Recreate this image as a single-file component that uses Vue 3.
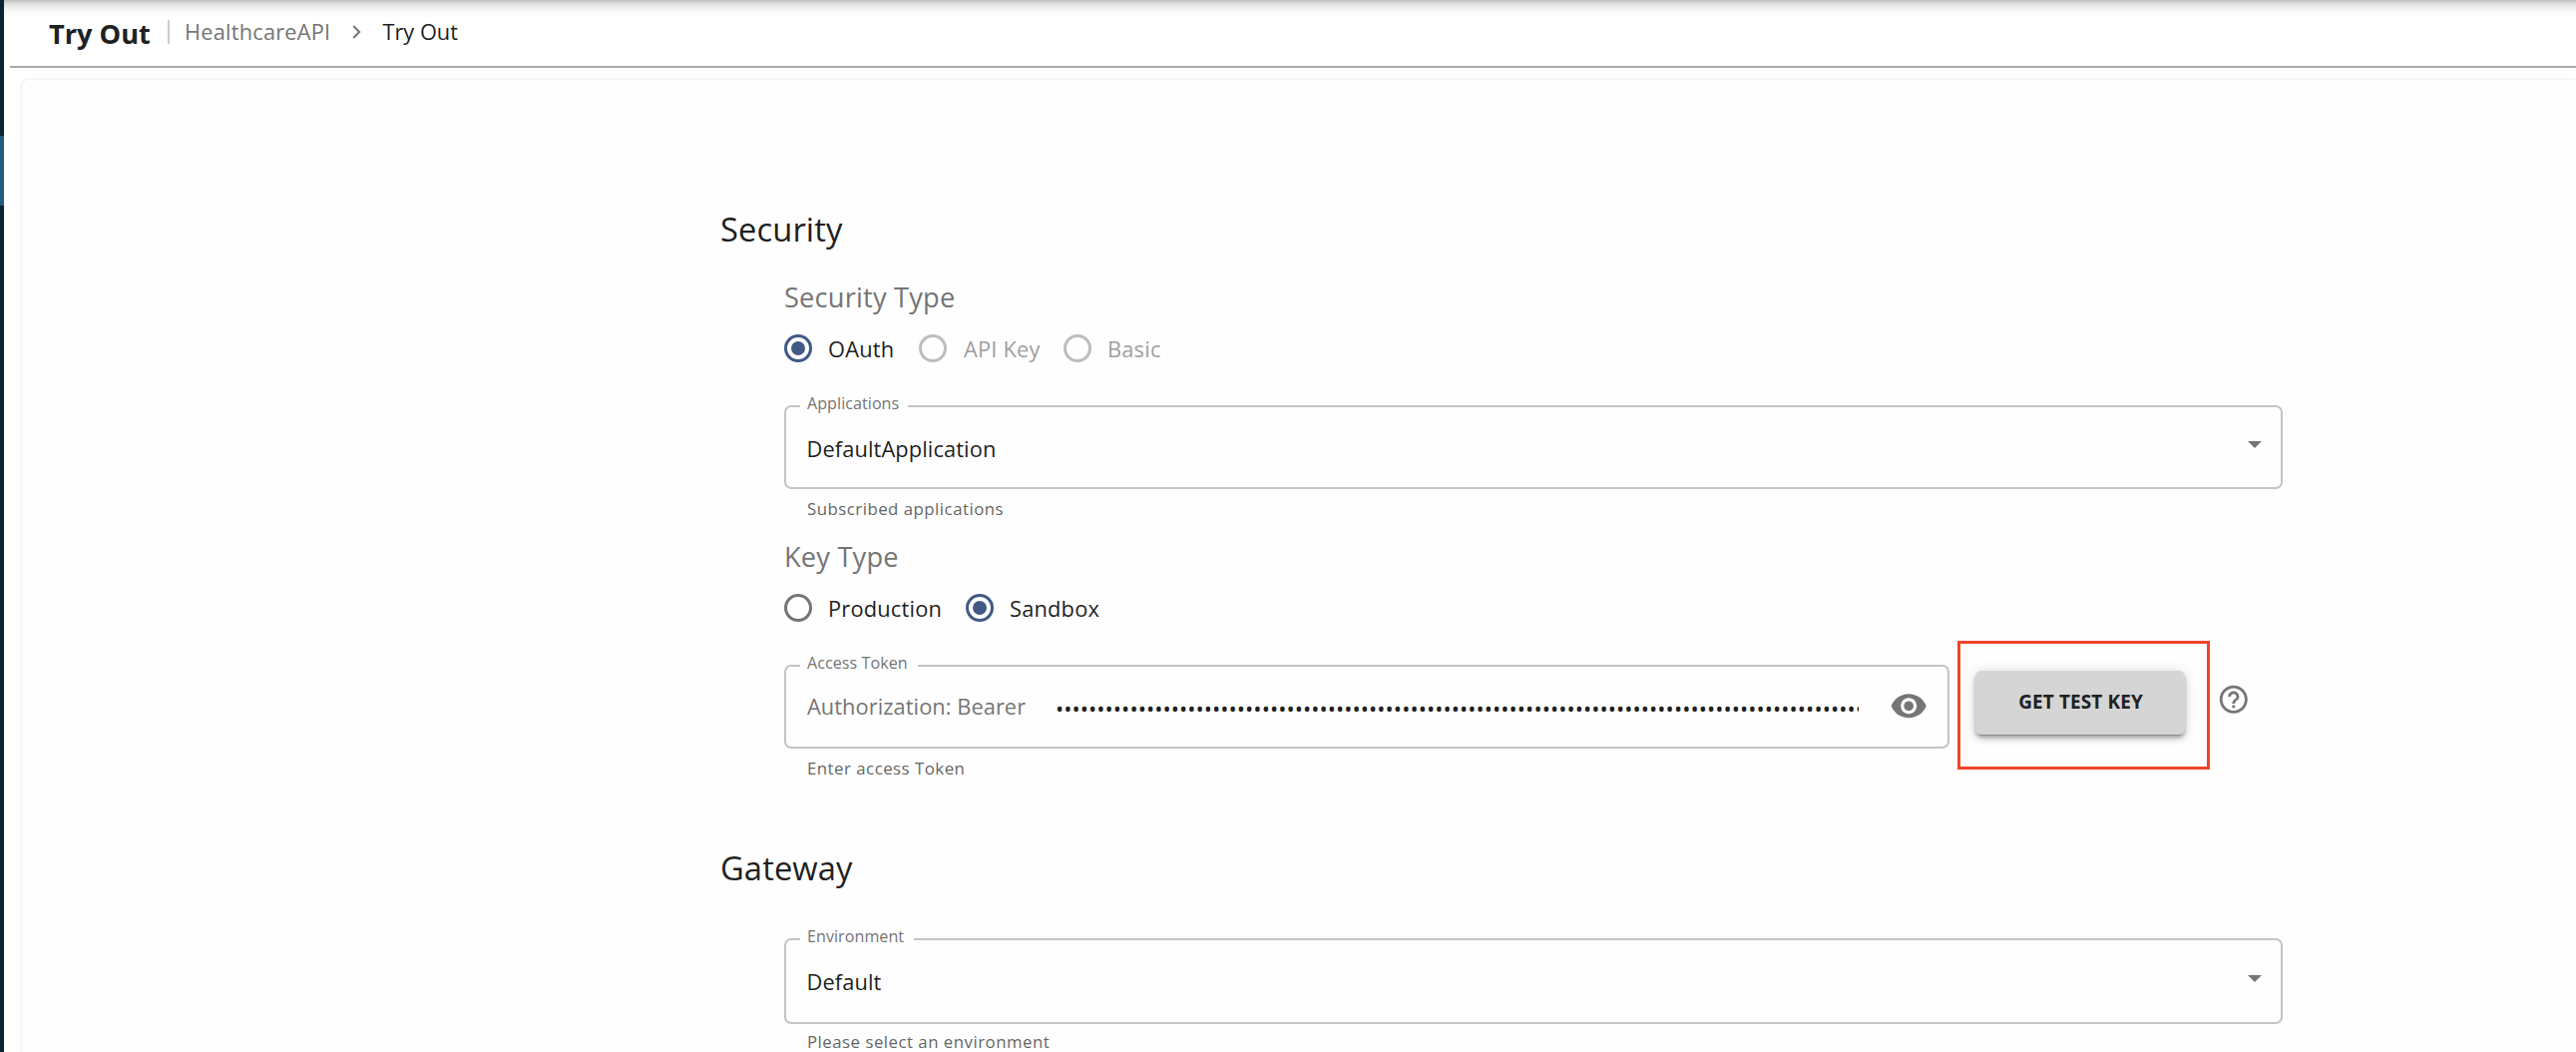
<script setup>
const token = '•'.repeat(98)
</script>

<template>
  <div class="app">
    <nav class="rail"><span class="rail-active"></span></nav>
    <main class="page">
      <header class="topbar">
        <h1 class="title">Try Out</h1>
        <span class="divider"></span>
        <span class="crumb muted">HealthcareAPI</span>
        <svg class="chevron" viewBox="0 0 9 14"><path d="M1.2 1 7.2 7l-6 6" fill="none" stroke="#757575" stroke-width="2" /></svg>
        <span class="crumb">Try Out</span>
      </header>
      <section class="card">
        <h2 class="heading">Security</h2>
        <div class="group">
          <h3 class="subheading">Security Type</h3>
          <div class="radios">
            <span class="dot on"></span><span class="radio-label a">OAuth</span>
            <span class="dot off"></span><span class="radio-label b disabled">API Key</span>
            <span class="dot off"></span><span class="radio-label disabled">Basic</span>
          </div>
          <div class="field select">
            <label class="label w1">Applications</label>
            <span class="value">DefaultApplication</span>
            <svg class="arrow" viewBox="0 0 14 7"><path d="M0 0h14L7 7z" fill="#757575" /></svg>
          </div>
          <p class="helper">Subscribed applications</p>
          <h3 class="subheading key">Key Type</h3>
          <div class="radios">
            <span class="dot"></span><span class="radio-label c">Production</span>
            <span class="dot on"></span><span class="radio-label">Sandbox</span>
          </div>
          <div class="token-row">
            <div class="field token">
              <label class="label w2">Access Token</label>
              <span class="prefix">Authorization: Bearer</span>
              <span class="bullets">{{ token }}</span>
              <svg class="eye" viewBox="0 0 24 24"><path fill="#757575" d="M12 4.5C7 4.5 2.73 7.61 1 12c1.73 4.39 6 7.5 11 7.5s9.27-3.11 11-7.5c-1.73-4.39-6-7.5-11-7.5zM12 17c-2.76 0-5-2.24-5-5s2.24-5 5-5 5 2.24 5 5-2.24 5-5 5zm0-8c-1.66 0-3 1.34-3 3s1.34 3 3 3 3-1.34 3-3-1.34-3-3-3z" /></svg>
            </div>
            <div class="highlight"><button class="button">GET TEST KEY</button></div>
            <svg class="help" viewBox="0 0 24 24"><path fill="#757575" d="M11 18h2v-2h-2v2zm1-16C6.48 2 2 6.48 2 12s4.48 10 10 10 10-4.48 10-10S17.52 2 12 2zm0 18c-4.41 0-8-3.59-8-8s3.59-8 8-8 8 3.59 8 8-3.59 8-8 8zm0-14c-2.21 0-4 1.79-4 4h2c0-1.1.9-2 2-2s2 .9 2 2c0 2-3 1.75-3 5h2c0-2.25 3-2.5 3-5 0-2.21-1.79-4-4-4z" /></svg>
          </div>
          <p class="helper">Enter access Token</p>
        </div>
        <h2 class="heading gateway">Gateway</h2>
        <div class="group">
          <div class="field select env">
            <label class="label w3">Environment</label>
            <span class="value">Default</span>
            <svg class="arrow" viewBox="0 0 14 7"><path d="M0 0h14L7 7z" fill="#757575" /></svg>
          </div>
          <p class="helper tight">Please select an environment</p>
        </div>
      </section>
    </main>
  </div>
</template>

<style>
body { margin: 0; overflow: hidden; background: #fff; }
</style>

<style scoped>
* { box-sizing: border-box; }
.app { display: flex; width: 2582px; height: 1054px; overflow: hidden; background: #fff; color: #1f1f1f; font-family: "Open Sans", sans-serif; }
h1, h2, h3, p { margin: 0; white-space: nowrap; }
.rail { width: 4px; height: 100%; padding-top: 136px; background: #0c2330; }
.rail-active { display: block; height: 70px; background: #255b7f; }
.page { flex: 1; min-width: 0; background: linear-gradient(#bdbdbd 0, #dadada 3px, #ededed 7px, #f9f9f9 12px, #fff 18px); }
.topbar { display: flex; align-items: flex-start; height: 68px; margin-left: 6px; padding-left: 39px; border-bottom: 2px solid #aaa; }
.title { font-size: 27.2px; font-weight: 700; line-height: 38px; margin-top: 15px; width: 119px; color: #212121; }
.divider { width: 2px; height: 24px; margin-top: 20px; background: #ccc; }
.crumb { font-size: 21.8px; line-height: 30px; letter-spacing: .00938em; margin-top: 17px; margin-left: 15px; }
.muted { color: #757575; }
.chevron { width: 9px; height: 14px; margin: 25px 0 0 22px; }
.chevron + .crumb { margin-left: 21px; letter-spacing: 0; }
.card { height: 1100px; margin: 12px 0 0 18px; padding: 128px 0 0 700px; border-radius: 6px 0 0 0; background: #fefefe; box-shadow: 0 0 3px rgba(0,0,0,.15); }
.heading { font-size: 32.7px; line-height: 44px; font-weight: 400; letter-spacing: .1px; }
.group { width: 1566px; padding-left: 64px; }
.subheading { font-size: 27.2px; line-height: 38px; font-weight: 400; color: #757575; letter-spacing: .0075em; margin-top: 27px; }
.subheading.key { margin-top: 16px; }
.radios { display: flex; align-items: center; height: 40px; margin-top: 12px; }
.dot { display: flex; align-items: center; justify-content: center; width: 28px; height: 28px; border: 3px solid #757575; border-radius: 50%; }
.dot.off { border-color: #bdbdbd; }
.dot.on { border-color: #415a85; }
.dot.on::after { content: ""; width: 14px; height: 14px; border-radius: 50%; background: #415a85; }
.radio-label { font-size: 21.8px; line-height: 30px; letter-spacing: .00938em; margin-left: 16px; padding-top: 1px; }
.radio-label.a { width: 91px; }
.radio-label.b { width: 101px; padding-left: 1px; }
.radio-label.c { width: 138px; }
.disabled { color: #9e9e9e; }
.field { position: relative; display: flex; align-items: center; width: 1502px; height: 84px; margin-top: 37px; padding: 0 19px 0 20px; border: 2px solid #c4c4c4; border-radius: 7px; }
.label { position: absolute; top: -14px; left: 14px; height: 20px; padding-left: 7px; background: #fefefe; font-size: 16.1px; line-height: 20px; letter-spacing: .003em; color: #757575; white-space: nowrap; }
.w1 { width: 108px; }
.w2 { width: 118px; }
.w3 { width: 114px; }
.value { flex: 1; font-size: 21.8px; line-height: 30px; letter-spacing: .005em; padding: 3px 0 0 .5px; }
.arrow { width: 14px; height: 7px; margin-bottom: 5px; }
.helper { margin: 7px 0 0 23px; font-size: 16.8px; line-height: 26px; letter-spacing: .03em; color: #666; }
.token-row { display: flex; margin-top: 37px; height: 84px; }
.token { width: 1168px; margin-top: 0; padding-left: 21px; padding-right: 20px; }
.prefix { width: 249px; font-size: 21.8px; line-height: 30px; letter-spacing: .003em; color: #757575; white-space: nowrap; }
.bullets { width: 805px; overflow: hidden; font-size: 21.8px; line-height: 30px; letter-spacing: .07px; padding-top: 3px; white-space: nowrap; }
.eye { width: 38.4px; height: 38.4px; margin-left: auto; margin-top: -2px; }
.highlight { display: flex; align-items: flex-start; width: 253px; height: 129px; margin: -24px 0 0 8px; padding: 27px 0 0 15px; border: 3px solid #f04428; }
.button { width: 210px; height: 64px; padding: 0 0 3px 1px; border: 0; border-radius: 6px; background: #d5d5d5; color: #212121; font: 700 19px/34px "Open Sans", sans-serif; letter-spacing: .1px; box-shadow: 0 4px 1px -3px rgba(0,0,0,.2), 0 3px 3px rgba(0,0,0,.14), 0 1px 14px rgba(0,0,0,.12), 0 4px 6px rgba(0,0,0,.2); }
.help { width: 33.6px; height: 33.6px; margin: 18px 0 0 7px; }
.gateway { margin-top: 65px; }
.env { height: 86px; margin-top: 48px; }
.env .value { padding-top: 2px; }
.helper.tight { margin-top: 5px; }
</style>
